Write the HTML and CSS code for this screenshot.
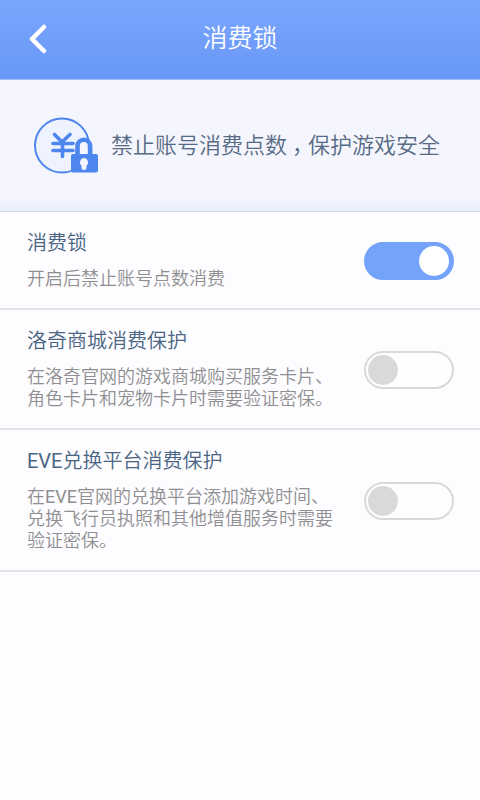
FILE: index.html
```
<!DOCTYPE html>
<html lang="zh-CN">
<head>
    <meta charset="UTF-8">
    <meta name="viewport" content="width=device-width, initial-scale=1.0">
    <title>消费锁</title>
    <link rel="stylesheet" href="styles.css">
</head>
<body>
    <header class="topbar">
        <button type="button" class="back" aria-label="返回">
            <svg width="20" height="30" viewBox="0 0 20 30">
                <path d="M16 3 L4 15 L16 27" fill="none" stroke="#fff" stroke-width="4.500" stroke-linecap="round" stroke-linejoin="round"/>
            </svg>
        </button>
        <h1>消费锁</h1>
    </header>

    <section class="banner">
        <svg class="banner-icon" width="66" height="58" viewBox="0 0 66 58">
            <circle cx="29" cy="28.500" r="27" fill="#eef3ff" stroke="#4d86ee" stroke-width="2"/>
            <g fill="none" stroke="#4d86ee" stroke-width="3.600" stroke-linecap="round">
                <path d="M21.500 17.500 L29 25 L37 17.500"/>
                <path d="M20 26.500 H40"/>
                <path d="M20 33.500 H40"/>
                <path d="M29.500 25 V39.500"/>
            </g>
            <path d="M44.500 38 V29 a6.300 6.300 0 0 1 12.600 0 V38" fill="#f5f5fe" stroke="#4d86ee" stroke-width="4.600"/>
            <rect x="38" y="37" width="27" height="18.500" rx="2" fill="#4d86ee"/>
            <path d="M51 41 a4.300 4.300 0 0 1 2.500 7.600 V50.500 a2.500 2.500 0 0 1 -5 0 V48.600 A4.300 4.300 0 0 1 51 41 Z" fill="#f5f5fe"/>
        </svg>
        <p>禁止账号消费点数<span class="comma">，</span>保护游戏安全</p>
    </section>

    <main>
        <div class="item">
            <label class="item-text" for="lock">
                <span class="item-title">消费锁</span>
                <span class="item-desc">开启后禁止账号点数消费</span>
            </label>
            <input type="checkbox" class="switch" id="lock" checked>
        </div>
        <div class="item">
            <label class="item-text" for="mall">
                <span class="item-title">洛奇商城消费保护</span>
                <span class="item-desc">在洛奇官网的游戏商城购买服务卡片、<br>角色卡片和宠物卡片时需要验证密保。</span>
            </label>
            <input type="checkbox" class="switch" id="mall">
        </div>
        <div class="item">
            <label class="item-text" for="eve">
                <span class="item-title"><span class="latin">EVE</span>兑换平台消费保护</span>
                <span class="item-desc">在<span class="latin">EVE</span>官网的兑换平台添加游戏时间、<br>兑换飞行员执照和其他增值服务时需要<br>验证密保。</span>
            </label>
            <input type="checkbox" class="switch" id="eve">
        </div>
    </main>
</body>
</html>
```
FILE: styles.css
```
*{
    margin: 0;
    padding: 0;
    box-sizing: border-box;
}
body{
    background-color: #fdfcfe;
    font-family: Roboto, "Noto Sans CJK SC", sans-serif;
    font-weight: 350;
}

/* 顶部栏 */
.topbar{
    display: grid;
    grid-template-columns: 76px 1fr 76px;
    align-items: center;
    height: 80px;
    padding-bottom: 1px;
    background-image: linear-gradient(#7ba6fe, #6897f6);
    border-bottom: 1px solid #a3bff8;
}
.topbar h1{
    grid-column: 2;
    color: #fff;
    font-size: 25px;
    font-weight: 350;
    line-height: 36px;
    text-align: center;
}
.back{
    display: flex;
    justify-content: center;
    align-items: center;
    height: 48px;
    border: none;
    background: none;
    cursor: pointer;
}

/* 提示 */
.banner{
    display: flex;
    align-items: center;
    gap: 12px;
    height: 132px;
    padding-left: 33px;
    background-image: linear-gradient(#f5f5fd 88%, #e9effb);
    border-bottom: 1px solid #cfdaee;
}
.banner-icon{
    flex: none;
}
.banner p{
    color: #566b85;
    font-size: 22px;
    line-height: 32px;
}
/* 逗号居中 */
.comma{
    margin: 0 5px;
    font-feature-settings: "halt";
}

/* 开关列表 */
.item{
    display: flex;
    justify-content: space-between;
    align-items: center;
    padding: 19px 26px 18px 27px;
    border-bottom: 2px solid #e4e3e7;
}
.item-text{
    display: flex;
    flex-direction: column;
    gap: 13px;
}
.item-title{
    color: #4a6583;
    font-size: 20px;
    line-height: 24px;
}
.item-desc{
    color: #8f8f92;
    font-size: 18px;
    line-height: 22px;
}
.latin{
    font-weight: 400;
}
.switch{
    appearance: none;
    display: flex;
    flex: none;
    align-items: center;
    width: 90px;
    height: 38px;
    padding: 0 3px 0 2px;
    border: 2px solid #d9d8db;
    border-radius: 19px;
    background-color: #fefefe;
    cursor: pointer;
}
.switch::before{
    content: "";
    width: 30px;
    height: 30px;
    border-radius: 50%;
    background-color: #d9d8da;
}
.switch:checked{
    justify-content: flex-end;
    border-color: #75a2fb;
    background-color: #75a2fb;
}
.switch:checked::before{
    background-color: #fff;
}
```
